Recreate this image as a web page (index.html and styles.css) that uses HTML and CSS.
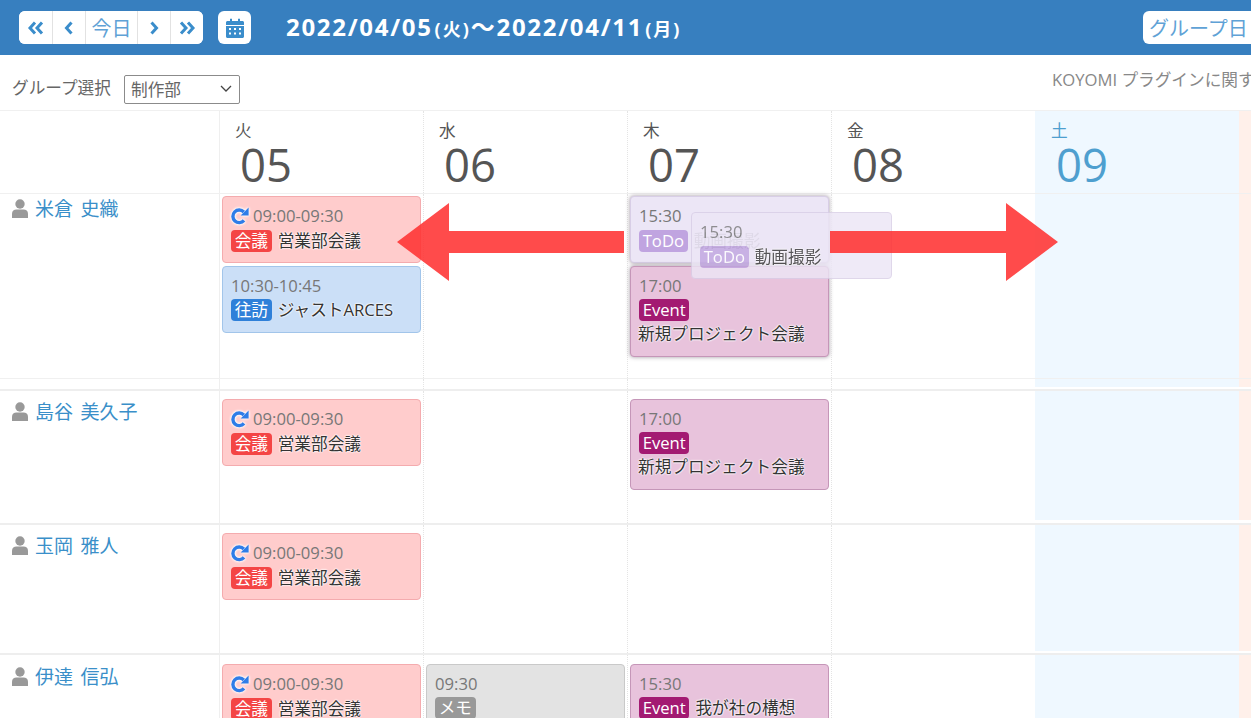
FILE: index.html
```html
<!DOCTYPE html>
<html lang="ja">
<head>
<meta charset="utf-8">
<title>KOYOMI</title>
<link rel="stylesheet" href="styles.css">
</head>
<body>
<svg class="defs" width="0" height="0" aria-hidden="true">
  <defs>
    <symbol id="i-redo" viewBox="0 0 19 19"><path d="M14 13.400A6.300 6.300 0 1 1 13.800 5" fill="none" stroke="#2f7de8" stroke-width="3.400"/><path d="M18.600 .6V8.600H10.600Z" fill="#2f7de8"/></symbol>
    <symbol id="i-user" viewBox="0 0 16 19"><circle cx="8" cy="5" r="4.700" fill="#999"/><path d="M0 19V14.500C0 12 2 10.500 4.500 10.500H11.500C14 10.500 16 12 16 14.500V19Z" fill="#999"/></symbol>
  </defs>
</svg>
<header class="topbar">
  <div class="btn-group">
    <button class="nav-btn"><svg width="18" height="14" viewBox="0 0 18 14"><path d="M8 1.500 3 7l5 5.500M15 1.500 10 7l5 5.500" fill="none" stroke="#3a8dcb" stroke-width="3"/></svg></button>
    <button class="nav-btn"><svg width="10" height="14" viewBox="0 0 10 14"><path d="M7.500 1.500 2.500 7l5 5.500" fill="none" stroke="#3a8dcb" stroke-width="3"/></svg></button>
    <button class="nav-btn today">今日</button>
    <button class="nav-btn"><svg width="10" height="14" viewBox="0 0 10 14"><path d="M2.500 1.500 7.500 7l-5 5.500" fill="none" stroke="#3a8dcb" stroke-width="3"/></svg></button>
    <button class="nav-btn"><svg width="18" height="14" viewBox="0 0 18 14"><path d="M3 1.500 8 7l-5 5.500M10 1.500 15 7l-5 5.500" fill="none" stroke="#3a8dcb" stroke-width="3"/></svg></button>
  </div>
  <button class="cal-btn"><svg width="18" height="20" viewBox="0 0 18 20"><path d="M1.500 3H4V.8H6V3H12V.8H14V3H16.500C17.300 3 18 3.700 18 4.500V7H0V4.500C0 3.700.7 3 1.500 3Z" fill="#3a8dcb"/><path fill-rule="evenodd" d="M0 8H18V18.500C18 19.300 17.300 20 16.500 20H1.500C.7 20 0 19.300 0 18.500ZM3 10V12H5V10ZM8 10V12H10V10ZM13 10V12H15V10ZM3 14.500V16.500H5V14.500ZM8 14.500V16.500H10V14.500ZM13 14.500V16.500H15V14.500Z" fill="#3a8dcb"/></svg></button>
  <h1 class="range">2022/04/05<small>(火)</small>～2022/04/11<small>(月)</small></h1>
  <button class="view-btn">グループ日</button>
</header>
<div class="subbar">
  <span class="sel-label">グループ選択</span>
  <div class="select">制作部<svg width="12" height="7" viewBox="0 0 12 7"><path d="M1 1l5 5 5-5" fill="none" stroke="#444" stroke-width="1.300"/></svg></div>
  <div class="notice">KOYOMI プラグインに関するお問い合わせ</div>
</div>
<main class="calendar">
  <div class="row head">
    <div class="cell"></div>
    <div class="cell day"><span class="dow">火</span><span class="num">05</span></div>
    <div class="cell day"><span class="dow">水</span><span class="num">06</span></div>
    <div class="cell day"><span class="dow">木</span><span class="num">07</span></div>
    <div class="cell day"><span class="dow">金</span><span class="num">08</span></div>
    <div class="cell day sat"><span class="dow">土</span><span class="num">09</span></div>
    <div class="cell sun"></div>
  </div>

  <div class="row r1">
    <div class="cell name"><svg class="user"><use href="#i-user"/></svg>米倉 史織</div>
    <div class="cell">
      <div class="ev red"><div class="time"><svg class="redo"><use href="#i-redo"/></svg>09:00-09:30</div><div class="line"><span class="tag t-red">会議</span><span class="title">営業部会議</span></div></div>
      <div class="ev blue"><div class="time">10:30-10:45</div><div class="line"><span class="tag t-blue">往訪</span><span class="title">ジャストARCES</span></div></div>
    </div>
    <div class="cell"></div>
    <div class="cell">
      <div class="ev todo lifted"><div class="time">15:30</div><div class="line"><span class="tag t-todo">ToDo</span><span class="title faded">動画撮影</span></div></div>
      <div class="ev pink lifted"><div class="time">17:00</div><div class="line"><span class="tag t-event">Event</span></div><div class="line next"><span class="title flush">新規プロジェクト会議</span></div></div>
    </div>
    <div class="cell"></div>
    <div class="cell sat"></div>
    <div class="cell sun"></div>
  </div>
  <div class="row spacer">
    <div class="cell"></div><div class="cell"></div><div class="cell"></div><div class="cell"></div><div class="cell"></div><div class="cell sat"></div><div class="cell sun"></div>
  </div>

  <div class="row r2">
    <div class="cell name"><svg class="user"><use href="#i-user"/></svg>島谷 美久子</div>
    <div class="cell"><div class="ev red"><div class="time"><svg class="redo"><use href="#i-redo"/></svg>09:00-09:30</div><div class="line"><span class="tag t-red">会議</span><span class="title">営業部会議</span></div></div></div>
    <div class="cell"></div>
    <div class="cell"><div class="ev pink"><div class="time">17:00</div><div class="line"><span class="tag t-event">Event</span></div><div class="line next"><span class="title flush">新規プロジェクト会議</span></div></div></div>
    <div class="cell"></div>
    <div class="cell sat"></div>
    <div class="cell sun"></div>
  </div>

  <div class="row r3">
    <div class="cell name"><svg class="user"><use href="#i-user"/></svg>玉岡 雅人</div>
    <div class="cell"><div class="ev red"><div class="time"><svg class="redo"><use href="#i-redo"/></svg>09:00-09:30</div><div class="line"><span class="tag t-red">会議</span><span class="title">営業部会議</span></div></div></div>
    <div class="cell"></div><div class="cell"></div><div class="cell"></div>
    <div class="cell sat"></div>
    <div class="cell sun"></div>
  </div>

  <div class="row r4">
    <div class="cell name"><svg class="user"><use href="#i-user"/></svg>伊達 信弘</div>
    <div class="cell"><div class="ev red"><div class="time"><svg class="redo"><use href="#i-redo"/></svg>09:00-09:30</div><div class="line"><span class="tag t-red">会議</span><span class="title">営業部会議</span></div></div></div>
    <div class="cell"><div class="ev gray"><div class="time">09:30</div><div class="line"><span class="tag t-gray">メモ</span></div></div></div>
    <div class="cell"><div class="ev pink"><div class="time">15:30</div><div class="line"><span class="tag t-event">Event</span><span class="title">我が社の構想</span></div></div></div>
    <div class="cell"></div>
    <div class="cell sat"></div>
    <div class="cell sun"></div>
  </div>
</main>

<div class="ev todo ghost"><div class="time">15:30</div><div class="line"><span class="tag t-todo">ToDo</span><span class="title">動画撮影</span></div></div>
<svg class="arrows" width="1251" height="718" viewBox="0 0 1251 718" aria-hidden="true">
  <polygon points="624,231 449,231 449,203 397,242 449,281 449,253 624,253"/>
  <polygon points="830,231 1006,231 1006,203 1058,242 1006,281 1006,253 830,253"/>
</svg>
</body>
</html>
```
FILE: styles.css
```css
* { box-sizing: border-box; }
html, body { margin: 0; height: 718px; overflow: hidden; }
body {
  position: relative;
  background: #fff;
  color: #555;
  font-family: "Open Sans", "Noto Sans CJK JP", sans-serif;
}
.defs { position: absolute; }
button { font-family: inherit; border: 0; padding: 0; background: #fff; }

.topbar {
  display: flex;
  align-items: center;
  height: 55px;
  padding: 0 0 0 19px;
  background: #377fbf;
}
.btn-group { display: flex; height: 33px; border-radius: 6px; overflow: hidden; background: #fff; }
.nav-btn {
  display: flex; align-items: center; justify-content: center;
  width: 33px; height: 33px;
  border-left: 1px solid #e2e2e2;
}
.nav-btn:first-child { border-left: 0; }
.nav-btn.today { width: 52px; font-size: 20px; color: #5fa2d6; }
.cal-btn {
  display: flex; align-items: center; justify-content: center;
  width: 33px; height: 33px; margin-left: 15px; border-radius: 6px;
}
.range {
  flex: 1;
  margin: 0 0 0 35px;
  padding-bottom: 4px;
  color: #fff;
  font-size: 24px;
  font-weight: 700;
  letter-spacing: 1.700px;
  white-space: nowrap;
}
.range small { font-size: 18px; letter-spacing: 2px; margin-left: 2px; }
.view-btn {
  width: 108px; height: 33px;
  padding-left: 6px;
  border-radius: 6px 0 0 6px;
  font-size: 20px; color: #5fa2d6;
  text-align: left; white-space: nowrap; overflow: hidden;
}

.subbar {
  display: flex;
  align-items: center;
  height: 56px;
  padding: 14px 0 0 12px;
  border-bottom: 1px solid #f0f0f0;
}
.sel-label { font-size: 16.670px; color: #666; width: 112px; margin-top: -6px; }
.select {
  display: flex; align-items: center; justify-content: space-between;
  width: 116px; height: 29px;
  padding: 0 7px 2px 6px;
  border: 1px solid #8b8b8b; border-radius: 2px;
  font-size: 16.670px; color: #666;
}
.notice {
  margin-left: auto; width: 199px; margin-top: -21px;
  overflow: hidden; white-space: nowrap;
  font-size: 16.670px; color: #888;
}

.row {
  display: grid;
  grid-template-columns: 219px repeat(5, 204px) 1fr;
  border-bottom: 1px solid #f0f0f0;
}
.cell { border-left: 1px dotted #e4e4e4; padding: 0 2px; }
.cell:first-child { border-left: 0; }
.cell:nth-child(2) { border-left: 1px solid #efefef; }
.sat { background: #eff8ff; border-left-color: transparent; margin-bottom: 3px; }
.sun { background: #fff0ea; border-left-color: transparent; margin-bottom: 3px; }

.head { height: 83px; }
.head .sat, .head .sun { margin-bottom: 0; }
.day.cell { display: flex; flex-direction: column; padding: 9px 0 0 15px; }
.dow { font-size: 16.670px; line-height: 22px; }
.num { font-size: 45.500px; line-height: 44px; margin: 0 0 0 5px; }
.day.sat { color: #4e9fcf; }

.r1 { height: 185px; }
.r1 .cell { padding-top: 2px; }
.r1 .sat, .r1 .sun { margin-bottom: 0; }
.spacer { height: 12px; border-bottom: 2px solid #eee; }
.spacer .sat, .spacer .sun { margin-bottom: 2px; }
.r2 { height: 134px; border-bottom-width: 2px; border-bottom-color: #eee; }
.r2 .cell { padding-top: 8px; }
.r3 { height: 130px; border-bottom-width: 2px; border-bottom-color: #eee; }
.r3 .cell { padding-top: 8px; }
.r3 .sat, .r3 .sun { margin-bottom: 2px; }
.r4 { height: 63px; border-bottom: 0; }
.r4 .cell { padding-top: 9px; }
.r4 .sat, .r4 .sun { margin-bottom: 0; }

.cell.name {
  padding-left: 12px;
  display: flex; align-items: flex-start;
  font-size: 19px; line-height: 26px; color: #3a8fc9;
  word-spacing: 2.500px;
}
.user { width: 16px; height: 19px; margin: 3px 7px 0 0; flex: none; }

.ev {
  padding: 9px 8px 10px;
  margin-bottom: 3px;
  border: 1px solid;
  border-radius: 4px;
}
.red { background: #ffcccc; border-color: #f4abae; padding-bottom: 9px; }
.red .line, .todo .line { margin-top: 3px; }
.blue { background: #cbdff7; border-color: #a2c5ea; }
.gray { background: #e3e3e3; border-color: #c9c9c9; }
.pink { background: #e8c3dc; border-color: #c596b8; }
.todo { background: #ece6f6; border-color: #d8cee6; padding-bottom: 9px; }
.lifted { box-shadow: 0 0 4px rgba(70, 50, 70, .5); }

.time { display: flex; align-items: center; height: 20px; font-size: 16.670px; line-height: 20px; color: #777; }
.redo { width: 19px; height: 19px; margin: 0 4px 0 -1px; flex: none; filter: drop-shadow(0 0 1px #fff) drop-shadow(0 0 1px #fff); }
.line { display: flex; align-items: center; margin-top: 2px; height: 24px; line-height: 22px; }
.line.next { margin-top: 0; }
.tag {
  height: 22px; padding: 0 3.700px;
  border-radius: 4px;
  font-size: 16.670px; line-height: 22px; color: #fff;
}
.t-red { background: #f44545; }
.t-blue { background: #2f80d9; }
.t-todo { background: #c0a4e0; }
.t-event { background: #a31a72; }
.t-gray { background: #999; }
.title {
  margin-left: 6px;
  font-size: 16.670px; color: #333;
  white-space: nowrap;
  text-shadow: 0 0 2px #fff, 0 0 2px #fff, 0 0 2px #fff;
}
.flush { margin-left: -1px; }
.faded { opacity: .35; text-shadow: none; }

.arrows { position: absolute; left: 0; top: 0; fill: rgba(255, 50, 50, .88); }
.ghost {
  position: absolute;
  left: 691px; top: 212px;
  width: 201px;
  opacity: .8;
}
```
